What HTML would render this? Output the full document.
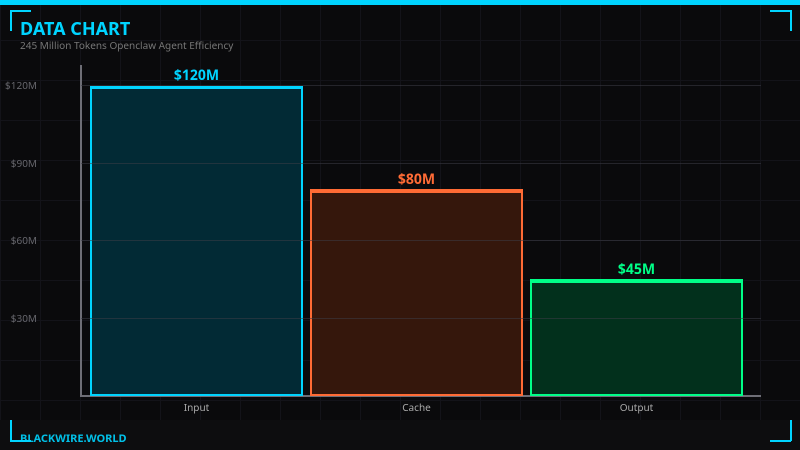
<!DOCTYPE html>
<html><head><meta charset="utf-8">
<style>
html,body{margin:0;padding:0;background:#0a0a0c}
#s{position:relative;width:800px;height:450px;overflow:hidden;background:#0a0a0c;font-family:"Noto Sans","Open Sans","Droid Sans","Noto Sans CJK SC","Liberation Sans",sans-serif}
#s div{position:absolute}
.t{white-space:nowrap}
.y{left:0;width:37px;text-align:right;font-size:10px;line-height:12px;color:#66666c}
.x{font-size:10px;line-height:12px;color:#aaa;text-align:center;width:213px;top:401px}
.v{font-size:14px;font-weight:bold;line-height:18px;text-align:center;width:213px}
.bar{box-sizing:border-box;border-style:solid;border-width:4px 2px 2px 2px;width:213px}
.g{left:81px;width:680px;height:1px;background:rgba(60,60,70,.55)}
</style></head><body>
<div id="s">
<div style="inset:0;background-image:linear-gradient(#131319 1px,transparent 1px),linear-gradient(90deg,#131319 1px,transparent 1px);background-size:40px 40px"></div>
<div style="left:0;top:420px;width:800px;height:30px;background:#0d0d0f"></div>
<div style="left:0;top:0;width:800px;height:5px;background:#00d4ff"></div>

<div class="t" style="left:20px;top:18px;font-size:18px;font-weight:bold;line-height:22px;color:#00d4ff">DATA CHART</div>
<div class="t" style="left:20px;top:39px;font-size:10px;line-height:12px;color:#777">245 Million Tokens Openclaw Agent Efficiency</div>

<div style="left:80px;top:65px;width:2px;height:332px;background:#6e6e76"></div>
<div style="left:80px;top:395px;width:681px;height:2px;background:#6e6e76"></div>

<div class="bar" style="left:90px;top:86px;height:310px;border-color:#00d4ff;border-top-width:3px;background:#022a35"></div>
<div class="bar" style="left:310px;top:189px;height:207px;border-color:#ff6b35;background:#35170c"></div>
<div class="bar" style="left:530px;top:279px;height:117px;border-color:#00ff88;background:#02301c"></div>

<div class="g" style="top:85px"></div>
<div class="g" style="top:163px"></div>
<div class="g" style="top:240px"></div>
<div class="g" style="top:318px"></div>

<div class="y t" style="top:79px">$120M</div>
<div class="y t" style="top:157px">$90M</div>
<div class="y t" style="top:234px">$60M</div>
<div class="y t" style="top:312px">$30M</div>

<div class="v t" style="left:90px;top:67px;color:#00d4ff">$120M</div>
<div class="v t" style="left:310px;top:171px;color:#ff6b35">$80M</div>
<div class="v t" style="left:530px;top:261px;color:#00ff88">$45M</div>

<div class="x t" style="left:90px">Input</div>
<div class="x t" style="left:310px">Cache</div>
<div class="x t" style="left:530px">Output</div>

<div class="t" style="left:20px;top:433px;font-size:11px;font-weight:bold;line-height:12px;color:#00d4ff;opacity:.9">BLACKWIRE.WORLD</div>

<div style="left:10px;top:10px;width:21px;height:2px;background:#00d4ff"></div>
<div style="left:10px;top:10px;width:2px;height:21px;background:#00d4ff"></div>
<div style="left:770px;top:10px;width:22px;height:2px;background:#00d4ff"></div>
<div style="left:790px;top:10px;width:2px;height:21px;background:#00d4ff"></div>
<div style="left:10px;top:440px;width:21px;height:2px;background:#00d4ff"></div>
<div style="left:10px;top:420px;width:2px;height:22px;background:#00d4ff"></div>
<div style="left:770px;top:440px;width:21px;height:2px;background:#00d4ff"></div>
<div style="left:790px;top:420px;width:2px;height:21px;background:#00d4ff"></div>
</div>
</body></html>
